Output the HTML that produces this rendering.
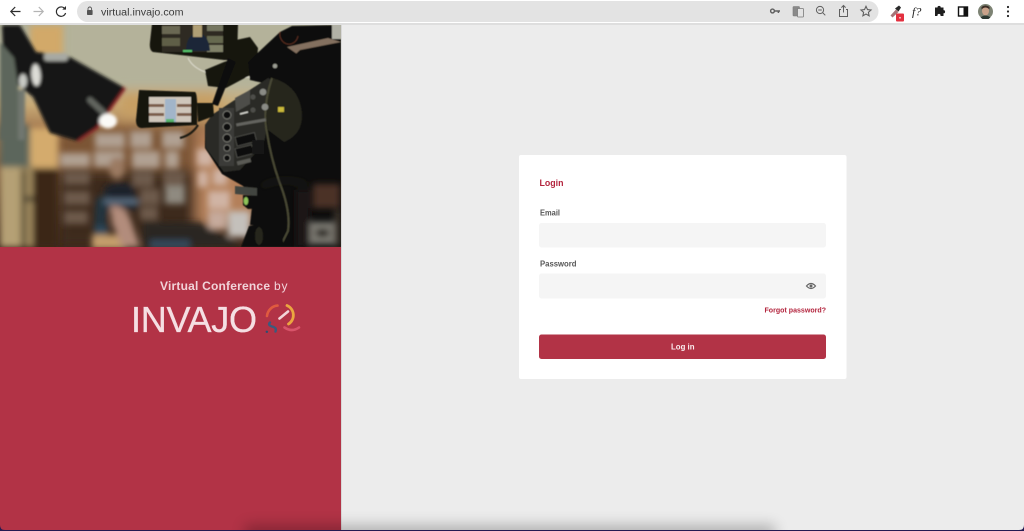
<!DOCTYPE html>
<html><head><meta charset="utf-8"><title>Login</title>
<style>
html,body{margin:0;padding:0;width:1024px;height:531px;overflow:hidden;background:#ececec;font-family:"Liberation Sans",sans-serif}
svg{position:absolute;left:0;top:0;display:block}
</style></head><body>
<svg width="1024" height="531" viewBox="0 0 1024 531" xmlns="http://www.w3.org/2000/svg" font-family="Liberation Sans, sans-serif">
<defs>
<filter id="b8" x="-30%" y="-30%" width="160%" height="160%"><feGaussianBlur stdDeviation="6"/></filter>
<filter id="b4" x="-30%" y="-30%" width="160%" height="160%"><feGaussianBlur stdDeviation="3.2"/></filter>
<filter id="b2" x="-30%" y="-30%" width="160%" height="160%"><feGaussianBlur stdDeviation="1.7"/></filter>
<filter id="b1" x="-20%" y="-20%" width="140%" height="140%"><feGaussianBlur stdDeviation=".65"/></filter>
<filter id="bs" x="-30%" y="-200%" width="160%" height="500%"><feGaussianBlur stdDeviation="7"/></filter>
<clipPath id="ph"><rect x="0" y="25" width="341" height="222"/></clipPath>
<clipPath id="pg"><rect x="0" y="25" width="1024" height="505"/></clipPath>
<linearGradient id="wall" x1="0" y1="0" x2="0" y2="1"><stop offset="0" stop-color="#aeae97"/><stop offset=".25" stop-color="#bab79d"/><stop offset=".36" stop-color="#c8aa76"/><stop offset=".46" stop-color="#a67c52"/><stop offset="1" stop-color="#3d281b"/></linearGradient>
</defs>

<!-- page -->
<rect width="1024" height="531" fill="#ececec"/>
<rect x="0" y="247" width="341" height="284" fill="#b23346"/>
<rect x="341" y="25" width="1" height="506" fill="#d8d8d8"/>

<!-- photo -->
<g clip-path="url(#ph)">
  <rect x="0" y="25" width="341" height="222" fill="url(#wall)"/>
  <g filter="url(#b8)">
    <rect x="62" y="15" width="280" height="72" fill="#b4b29a"/>
    <rect x="120" y="92" width="100" height="26" fill="#c79f63"/>
    <rect x="58" y="128" width="150" height="42" fill="#7c5536"/>
    <rect x="58" y="170" width="150" height="77" fill="#3e291c"/>
    <rect x="196" y="130" width="60" height="95" fill="#b4805a"/>
  </g>
  <g filter="url(#b4)">
    <rect x="30" y="25" width="33" height="32" fill="#d2a969"/>
    <rect x="30" y="128" width="28" height="40" fill="#d4ab6d"/>
    <rect x="0" y="165" width="20" height="82" fill="#b5a075"/>
    <rect x="20" y="165" width="13" height="82" fill="#a08a5f"/>
    <rect x="33" y="168" width="25" height="79" fill="#3a2518"/>
    <rect x="0" y="125" width="30" height="42" fill="#5c665c"/>
    <g fill="#b0a092">
      <rect x="60" y="153" width="30" height="14"/><rect x="95" y="133" width="30" height="15"/><rect x="130" y="131" width="22" height="17"/><rect x="162" y="131" width="22" height="17"/>
      <rect x="94" y="151" width="30" height="16"/><rect x="132" y="151" width="28" height="17"/><rect x="165" y="151" width="14" height="17"/>
    </g>
    <g fill="#6d5a4c">
      <rect x="64" y="171" width="26" height="14"/><rect x="132" y="171" width="22" height="16"/><rect x="163" y="171" width="22" height="16"/>
      <rect x="64" y="191" width="26" height="14"/><rect x="140" y="189" width="20" height="16"/>
      <rect x="64" y="211" width="24" height="13"/><rect x="140" y="207" width="18" height="13"/>
    </g>
    <rect x="165" y="186" width="20" height="18" fill="#8f8a80"/>
    <g fill="#d0b4a4">
      <rect x="197" y="149" width="16" height="17"/><rect x="213" y="169" width="14" height="16"/><rect x="198" y="171" width="10" height="16"/>
      <rect x="208" y="191" width="22" height="18"/>
    </g>
    <rect x="228" y="211" width="22" height="26" fill="#c4c0bb"/>
    <rect x="208" y="211" width="18" height="18" fill="#c6aa9c"/>
    <path d="M143 222 L200 223 L242 247 L143 247z" fill="#2a2624"/>
    <rect x="92" y="235" width="34" height="14" fill="#c49e6c"/>
    <rect x="150" y="240" width="40" height="9" fill="#35495c"/>
    <!-- person -->
    <ellipse cx="117" cy="168" rx="8" ry="11" fill="#9b7a62"/>
    <path d="M104 188 q14 -10 30 -2 l4 24 l-34 2z" fill="#1b242b"/>
    <path d="M96 198 l12 -4 l-2 34 l-12 4z" fill="#233441"/>
    <rect x="104" y="199" width="35" height="5" fill="#5d7184"/>
    <path d="M110 206 q14 -2 20 12 l10 29 l-18 0 l-10 -24z" fill="#b28c7b"/>
    <rect x="94" y="226" width="14" height="9" fill="#2f4a5c"/>
    <rect x="22" y="170" width="3.5" height="77" fill="#2b2a22"/>
    <rect x="23" y="197" width="12" height="4" fill="#2b2a22"/>
  </g>
  <!-- softbox -->
  <g filter="url(#b2)">
    <path d="M2 25 L20 25 L36 52 L68 56 L125 88 L97 128 L78 141 L50 133 L33 97 L18 85 L3 50z" fill="#171916"/>
    <path d="M125 88 L97 128 L78 141" stroke="#8c2a2c" stroke-width="2.5" fill="none"/>
    <rect x="44" y="53" width="24" height="8" rx="3" fill="#a7a9a3"/>
    <ellipse cx="36" cy="75" rx="4.5" ry="11" fill="#dcdcd6" transform="rotate(-4 36 75)"/>
    <ellipse cx="23" cy="81" rx="4" ry="7" fill="#c7c9c4"/>
    <path d="M90 100 L104 113" stroke="#62655f" stroke-width="6" stroke-linecap="round"/>
    <path d="M0 42 L14 58 L18 86 L18 140 L0 140z" fill="#5d665c"/>
    <rect x="18" y="90" width="7" height="50" fill="#717770"/>
    <ellipse cx="108" cy="121" rx="9" ry="7.5" fill="#fbfaf7"/>
  </g>
  <!-- camera -->
  <g filter="url(#b1)">
    <!-- upper monitor -->
    <path d="M152 24 L238 24 L237 60 L224 60 Q190 56 153 52 Q149 50 150 42z" fill="#141310"/>
    <rect x="162" y="25" width="61" height="27" fill="#2e2c24"/>
    <rect x="162" y="26" width="18" height="8" fill="#6a6852"/><rect x="162" y="38" width="18" height="8" fill="#5e5f46"/>
    <rect x="207" y="25" width="16" height="6" fill="#747660"/><rect x="207" y="36" width="16" height="7" fill="#66694f"/><rect x="207" y="45" width="16" height="7" fill="#808168"/>
    <path d="M186 51 q0 -13 8 -17 l7 0 q8 3 9 17z" fill="#1a2738"/>
    <rect x="193" y="25" width="9" height="12" fill="#b09f74"/>
    <rect x="183" y="50" width="9" height="2" fill="#56c56c"/>
    <path d="M188 58 Q198 80 258 77" stroke="#d8d6c8" stroke-width="1.2" fill="none"/>
    <!-- holder and arm -->
    <path d="M236 40 L250 37 L258 48 L256 72 L226 88 L208 86 L205 70 L224 62 L236 58z" fill="#15150f"/>
    <path d="M228 58 L212 104 L218 106 L236 62z" fill="#0f0f0a"/>
    <path d="M248 62 L280 32 L292 26 L341 25 L341 50 L300 60 L268 84 L250 80z" fill="#10100b"/>
    <path d="M280 32 a9 10 0 1 0 18 4" fill="none" stroke="#5a2e22" stroke-width="1"/>
    <path d="M287 47 L328 38 L341 42 L341 48 L300 56z" fill="#83705f"/>
    <rect x="332" y="25" width="9" height="14" fill="#b1b1a6"/>
    <!-- main body -->
    <path d="M270 78 L300 50 L341 42 L341 247 L262 247 L260 206 L243 186 L222 174 L205 148 L205 125 L212 115 L250 90z" fill="#0f0f09"/>
    <path d="M212 115 L268 78 L272 80 Q264 100 266 125 Q266 140 262 146 L240 170 L224 172 L206 148 L205 125z" fill="#2a2b27"/>
    <path d="M272 78 Q300 85 302 115 Q302 135 284 142 L268 130 Q264 100 272 78z" fill="#25251e"/>
    <path d="M272 78 q-10 30 -5 55 q4 25 12 48 q12 30 9 50 l-8 16" stroke="#4a4936" stroke-width="2" fill="none"/>
    <rect x="219" y="108" width="15" height="58" fill="#3a3b37"/>
    <g fill="#0c0c0a" stroke="#787872" stroke-width=".9">
      <circle cx="227" cy="115" r="4"/><circle cx="227" cy="127" r="4"/><circle cx="227" cy="138" r="4"/><circle cx="227" cy="148" r="3.2"/><circle cx="227" cy="158" r="3.2"/>
    </g>
    <path d="M235 98 L250 90 L250 104 L236 112z" fill="#4d4e49"/>
    <rect x="236" y="135" width="20" height="9" fill="#0f0f0d" stroke="#5c5c57" stroke-width=".6" transform="rotate(-14 245 140)"/>
    <rect x="236" y="147" width="17" height="9" fill="#0f0f0d" stroke="#5c5c57" stroke-width=".6" transform="rotate(-14 243 152)"/>
    <rect x="237" y="160" width="14" height="4" fill="#5a5a55" transform="rotate(-14 243 162)"/>
    <rect x="252" y="140" width="12" height="14" fill="#171713"/>
    <circle cx="263" cy="92" r="3.4" fill="#8a8b85"/><circle cx="265" cy="107" r="3.4" fill="#8a8b85"/>
    <circle cx="253" cy="97" r="2.6" fill="#4d4e49"/><circle cx="253" cy="110" r="2.6" fill="#4d4e49"/>
    <rect x="278" y="107" width="6" height="5" fill="#c9b93a"/>
    <rect x="236" y="121" width="30" height="3" fill="#64645e" transform="rotate(-10 250 122)"/>
    <circle cx="275" cy="66" r="2.3" fill="#9a9b92"/>
    <path d="M240 114 L248 112" stroke="#d5d5cf" stroke-width="1.5"/>
    <!-- side monitor -->
    <path d="M139 90 L195 92 Q198 93 197 125 L142 128 Q136 128 136 120z" fill="#121210"/>
    <rect x="149" y="97" width="42" height="25" fill="#cfc6ba"/>
    <rect x="165" y="99" width="11" height="23" fill="#a2b5c9"/>
    <rect x="149" y="104" width="15" height="3" fill="#7b5e4c"/><rect x="149" y="113" width="15" height="3" fill="#7b5e4c"/>
    <rect x="177" y="104" width="14" height="3" fill="#7b5e4c"/><rect x="177" y="113" width="14" height="3" fill="#7b5e4c"/>
    <rect x="166" y="119" width="8" height="3" fill="#59b56c"/>
    <path d="M197 103 L213 103 L214 116 L198 122z" fill="#141410"/>
    <path d="M198 125 q-6 10 -18 13" stroke="#12120e" stroke-width="2" fill="none"/>
    <!-- bracket / mount -->
    <path d="M235 186 L257 188 L257 196 L235 194z" fill="#43443f"/>
    <path d="M243 195 L262 196 L262 208 L248 209 L243 205z" fill="#0b0b07"/>
    <ellipse cx="246" cy="201" rx="2.3" ry="4" fill="#8ec25a"/>
    <path d="M252 207 L268 206 L264 225 L250 225z" fill="#11110c"/>
    <path d="M241 247 L249 226 L268 222 L282 235 L284 247z" fill="#0c0c08"/>
    <ellipse cx="259" cy="236" rx="4" ry="9" fill="#26261f"/>
  </g>
  <g filter="url(#b4)">
    <rect x="313" y="184" width="27" height="24" fill="#4b3126"/>
    <rect x="310" y="222" width="24" height="22" fill="#7f7d74"/>
    <rect x="316" y="229" width="13" height="8" fill="#25231d"/>
    <rect x="334" y="210" width="7" height="37" fill="#3a332c"/>
    <rect x="296" y="190" width="14" height="57" fill="#1f1813"/>
    <path d="M262 186 q20 -10 44 -2" stroke="#2a2a22" stroke-width="2" fill="none"/>
  </g>
</g>

<!-- bottom shadow -->
<g clip-path="url(#pg)">
  <rect x="245" y="525" width="530" height="18" fill="#000" opacity=".25" filter="url(#bs)"/>
</g>
<!-- bottom edge -->
<rect x="0" y="530" width="1024" height="1" fill="#241b52"/>
<path d="M0 525 Q0 530 5 530 L0 530z" fill="#241b52"/><path d="M1024 525 Q1024 530 1019 530 L1024 530z" fill="#241b52"/>

<!-- browser toolbar -->
<rect x="0" y="0" width="1024" height="23.5" fill="#fff"/>
<rect x="0" y="23" width="1024" height="2" fill="#dedede"/>
<rect x="77" y="1" width="801.5" height="21" rx="10.5" fill="#e3e3e3"/>
<g fill="none" stroke="#2c2c2c" stroke-width="1.2">
  <path d="M20.5 11.5 H11 M15.2 7 L10.8 11.5 L15.2 16"/>
  <path d="M33.5 11.5 H43 M38.8 7 L43.2 11.5 L38.8 16" stroke="#b4b4b4"/>
  <path d="M65 9 A4.7 4.7 0 1 0 65.6 13"/>
</g>
<path d="M62.3 9.6 H66 V6z" fill="#2c2c2c"/>
<rect x="87" y="10" width="5.6" height="5" rx=".7" fill="#555"/>
<path d="M88 10 V8.8 a1.8 1.8 0 0 1 3.6 0 V10" stroke="#555" stroke-width=".9" fill="none"/>
<text x="101" y="15.5" font-size="10" fill="#3a3a3a" textLength="82.5" lengthAdjust="spacingAndGlyphs">virtual.invajo.com</text>

<!-- omnibox icons -->
<g fill="none" stroke="#5f5f5f">
  <circle cx="772.5" cy="11" r="1.9" stroke-width="1.4"/>
  <path d="M774.5 11 H780 M778.4 11 V13" stroke-width="1.5"/>
  <rect x="793" y="6.5" width="6.5" height="9.5" rx=".7" fill="#8a8a8a" stroke="#7a7a7a" stroke-width=".6"/>
  <rect x="797.5" y="8.5" width="6" height="8.5" rx=".7" fill="#e3e3e3" stroke="#7a7a7a" stroke-width=".8"/>
  <circle cx="820" cy="10" r="3.6" stroke-width="1"/>
  <path d="M822.7 12.7 L825.3 15.3 M818.2 10 H821.8" stroke-width="1"/>
  <path d="M841 9.5 H839.5 V16.5 H847.5 V9.5 H846 M843.5 12.5 V5.5 M841.4 7.6 L843.5 5.5 L845.6 7.6" stroke-width="1"/>
  <path d="M866 6.3 L867.5 9.6 L871 10 L868.4 12.3 L869.1 15.8 L866 14 L862.9 15.8 L863.6 12.3 L861 10 L864.5 9.6z" stroke-width="1.1"/>
</g>
<!-- extensions -->
<path d="M890.5 15.5 L896 9.5 L898.5 12 L892.5 17.5z" fill="#a57478"/>
<path d="M895 8.5 L899 5.5 L901 7.5 L898.5 11.5z" fill="#2a2a2a"/>
<rect x="896" y="13.5" width="8" height="8" rx="1" fill="#e3303f"/>
<rect x="899" y="17" width="2" height="1.5" fill="#f3b0b6"/>
<text x="912" y="15.5" font-family="Liberation Serif, serif" font-style="italic" font-size="12" fill="#222">f?</text>
<path d="M935 9 h2.5 a1.6 1.6 0 1 1 3.2 0 h2.8 v2.6 a1.6 1.6 0 1 1 0 3.2 v2.7 h-3 a1.6 1.6 0 1 0 -3 0 h-2.5 z" fill="#1f1f1f" transform="translate(0 -1.5)"/>
<rect x="958.5" y="7" width="9" height="9" fill="none" stroke="#111" stroke-width="1.4"/>
<rect x="963.5" y="7" width="4" height="9" fill="#111"/>
<circle cx="985.5" cy="11.5" r="7.5" fill="#7d8374"/>
<ellipse cx="985.5" cy="11" rx="3.5" ry="4.4" fill="#c9a28a"/>
<path d="M981.5 9.5 q4 -4 8 0 l0 -2.5 q-4 -3 -8 0z" fill="#3a2c24"/>
<path d="M980.5 17.5 q5 -4 10 0 l-2 1.5 h-6z" fill="#2d3832"/>
<circle cx="1008" cy="7" r="1.1" fill="#222"/><circle cx="1008" cy="11.5" r="1.1" fill="#222"/><circle cx="1008" cy="16" r="1.1" fill="#222"/>

<!-- left panel text -->
<text x="160" y="290" font-size="12" font-weight="bold" fill="#f1d3d9" textLength="110" lengthAdjust="spacing">Virtual Conference</text>
<text x="274" y="290" font-size="12" fill="#f1d3d9" textLength="13.5" lengthAdjust="spacing">by</text>
<text x="131" y="332" font-size="36" fill="#f5dfe3" stroke="#f5dfe3" stroke-width=".3" textLength="126" lengthAdjust="spacing">INVAJO</text>
<g fill="none" stroke-linecap="round">
  <path d="M267 316 A11.5 11.5 0 0 1 277.5 305.6" stroke="#e05a3f" stroke-width="2.6"/>
  <path d="M287 305.5 A10.5 10.5 0 0 1 288.5 324" stroke="#eba640" stroke-width="2.8"/>
  <path d="M279.5 318.5 L288 311.5" stroke="#f2d4d8" stroke-width="2.6"/>
  <path d="M284.5 327.5 Q292 332.5 299 327.5" stroke="#d8546a" stroke-width="2.6"/>
  <path d="M270 322.5 Q267.5 325 272 326.5 Q277 327.5 275.5 331.5" stroke="#3b5a7d" stroke-width="2.4"/>
  <path d="M266.8 331.8 h.1" stroke="#2c4e70" stroke-width="2.4"/>
</g>

<!-- card -->
<rect x="519" y="155" width="327.5" height="224" rx="2" fill="#fff"/>
<text x="539.5" y="186" font-size="9.6" font-weight="bold" fill="#b3243d" textLength="24" lengthAdjust="spacingAndGlyphs">Login</text>
<text x="540" y="215.5" font-size="8" font-weight="bold" fill="#555" textLength="20" lengthAdjust="spacingAndGlyphs">Email</text>
<rect x="539" y="223" width="287" height="24.5" rx="2.5" fill="#f5f5f5"/>
<text x="540" y="266.5" font-size="8" font-weight="bold" fill="#555" textLength="36.5" lengthAdjust="spacingAndGlyphs">Password</text>
<rect x="539" y="273.5" width="287" height="25" rx="2.5" fill="#f5f5f5"/>
<path d="M806.5 286 Q811 281 815.5 286 Q811 291 806.5 286z" fill="none" stroke="#666" stroke-width="1.2"/>
<circle cx="811" cy="286" r="1.5" fill="#666"/>
<text x="764.5" y="312.5" font-size="7.6" font-weight="bold" fill="#b3243d" textLength="61.5" lengthAdjust="spacingAndGlyphs">Forgot password?</text>
<rect x="539" y="334.5" width="287" height="24.5" rx="2.5" fill="#b23346"/>
<text x="671" y="349.5" font-size="8.4" font-weight="bold" fill="#fbeef0" textLength="23.5" lengthAdjust="spacingAndGlyphs">Log in</text>
</svg>
</body></html>
